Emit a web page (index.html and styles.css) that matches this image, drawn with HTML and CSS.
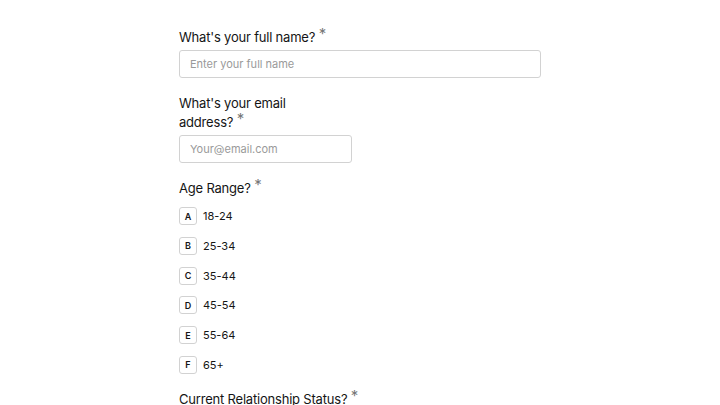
FILE: index.html
```html
<!DOCTYPE html>
<html lang="en">
<head>
  <meta charset="UTF-8" />
  <meta name="viewport" content="width=device-width, initial-scale=1" />
  <title>Survey</title>
  <link rel="stylesheet" href="styles.css">
</head>
<body>

  <div class="container">
    <div class="field">
      <label for="fullName">What's your full name?&nbsp;<span class="req">*</span></label>
      <input type="text" id="fullName" placeholder="Enter your full name" />
    </div>

    <div class="field narrow">
      <label for="email">What's your email address?&nbsp;<span class="req">*</span></label>
      <input type="email" id="email" placeholder="Your@email.com" />
    </div>

    <div class="field">
      <label>Age Range?&nbsp;<span class="req">*</span></label>
      <div class="options">
        <div class="option"><span class="key">A</span>18-24</div>
        <div class="option"><span class="key">B</span>25-34</div>
        <div class="option"><span class="key">C</span>35-44</div>
        <div class="option"><span class="key">D</span>45-54</div>
        <div class="option"><span class="key">E</span>55-64</div>
        <div class="option"><span class="key">F</span>65+</div>
      </div>
    </div>

    <div class="field">
      <label>Current Relationship Status?&nbsp;<span class="req">*</span></label>
    </div>
  </div>

</body>
</html>
```

FILE: styles.css
```css
* {
  box-sizing: border-box;
  font-family: Inter, 'Noto Sans', sans-serif;
}

body {
  margin: 0;
  padding: 0;
  background: #fff;
  color: #151515;
  overflow: hidden;
  height: 405px;
}

.container {
  width: 362px;
  margin: 0 auto;
  padding-top: 28px;
}

.field {
  margin-bottom: 16px;
}

.field.options-field {
  margin-bottom: 14px;
}

.field.narrow {
  width: 173px;
}

.field.narrow label {
  max-width: 150px;
}

label {
  display: block;
  font-size: 13px;
  letter-spacing: -0.2px;
  line-height: 19px;
  margin-bottom: 3px;
  color: #151515;
}

.req {
  color: #777;
  font-size: 15px;
  line-height: 0;
  vertical-align: 3px;
}

input[type="text"],
input[type="email"] {
  display: block;
  width: 100%;
  height: 28px;
  padding: 0 10px;
  border: 1px solid #d2d2d2;
  border-radius: 3px;
  outline: none;
  font-size: 11px;
  color: #151515;
  background: #fff;
}

input::placeholder {
  color: #9a9a9a;
}

.options {
  display: flex;
  flex-direction: column;
  gap: 11.8px;
  padding-top: 6px;
}

.option {
  display: flex;
  align-items: center;
  gap: 6px;
  font-size: 11px;
  height: 18px;
  color: #151515;
}

.key {
  flex-shrink: 0;
  display: flex;
  align-items: center;
  justify-content: center;
  width: 18px;
  height: 18px;
  border: 1px solid #d2d2d2;
  border-radius: 3px;
  font-size: 9px;
  font-weight: 600;
}
```
